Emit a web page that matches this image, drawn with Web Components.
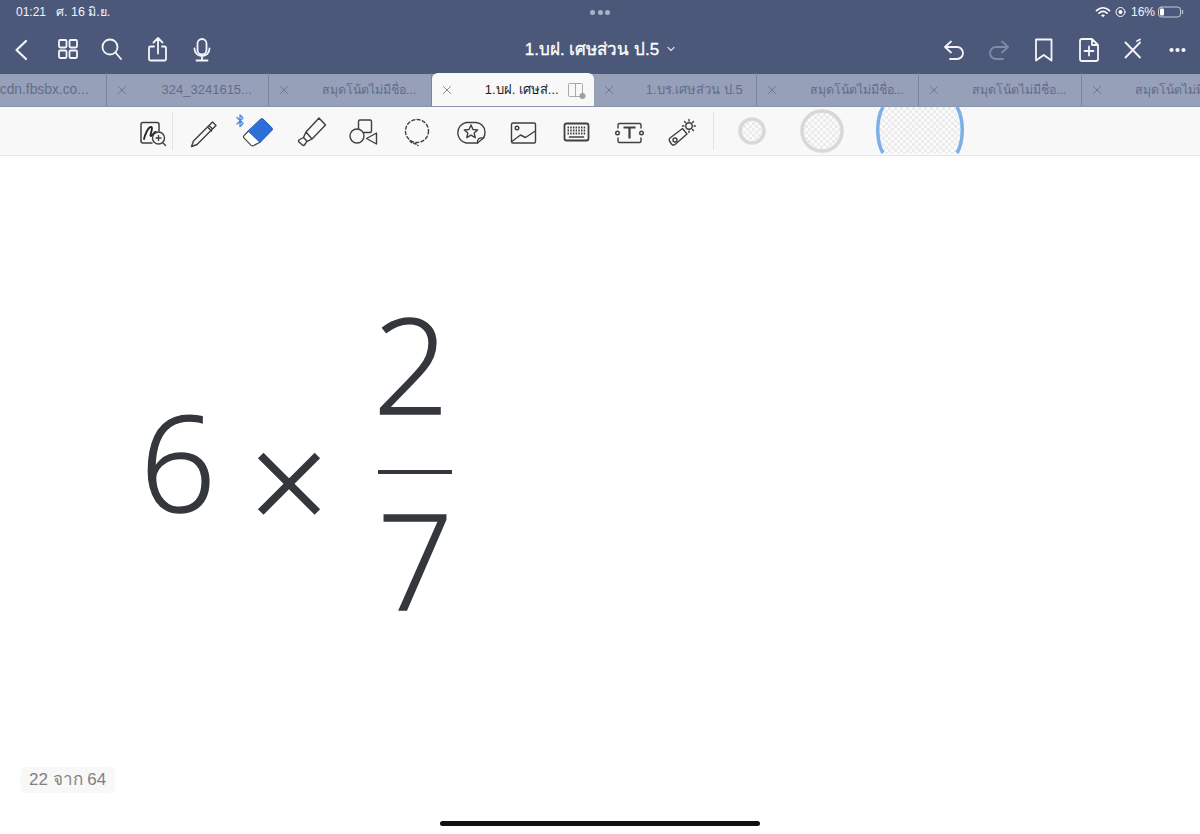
<!DOCTYPE html>
<html lang="th">
<head>
<meta charset="utf-8">
<title>Notes</title>
<style>
  html, body { margin: 0; height: 100%; background: #fff; }
  body { font-family: "Liberation Sans", "Noto Sans", "DejaVu Sans", sans-serif; overflow: hidden; }
  note-app { height: 834px; }
</style>
</head>
<body>
<note-app>
  <status-bar></status-bar>
  <nav-bar>1.บฝ. เศษส่วน ป.5</nav-bar>
  <tab-strip>
    <doc-tab first>cdn.fbsbx.co...</doc-tab>
    <doc-tab>324_3241615...</doc-tab>
    <doc-tab thai>สมุดโน้ตไม่มีชื่อ...</doc-tab>
    <doc-tab active>1.บฝ. เศษส่...</doc-tab>
    <doc-tab>1.บร.เศษส่วน ป.5</doc-tab>
    <doc-tab thai>สมุดโน้ตไม่มีชื่อ...</doc-tab>
    <doc-tab thai>สมุดโน้ตไม่มีชื่อ...</doc-tab>
    <doc-tab thai>สมุดโน้ตไม่มีชื่อ...</doc-tab>
  </tab-strip>
  <tool-bar></tool-bar>
  <note-page></note-page>
</note-app>

<script>
const svg = (w, h, body, extra = '') =>
    `<svg width="${w}" height="${h}" viewBox="0 0 ${w} ${h}" fill="none" stroke-linecap="round" stroke-linejoin="round" ${extra}>${body}</svg>`;

class StatusBar extends HTMLElement {
    constructor() {
        super();
        this.attachShadow({mode: 'open'});
    }

    connectedCallback() {
        this.shadowRoot.innerHTML = `
            <style>
                :host {
                    align-items: center;
                    background: #4c5879;
                    color: #f2f3f7;
                    display: grid;
                    font-size: 12px;
                    grid-template-columns: 1fr auto 1fr;
                    height: 24px;
                    padding: 0 16px;
                }
                .left, .right { align-items: center; display: flex; }
                .left span + span { margin-left: 10px; font-size: 12.5px; }
                .right { justify-content: flex-end; }
                .dots { display: flex; gap: 2.5px; }
                .dots i { background: #aab2c8; border-radius: 50%; height: 5px; width: 5px; }
                svg { display: block; }
            </style>
            <div class="left"><span>01:21</span><span>ศ. 16 มิ.ย.</span></div>
            <div class="dots"><i></i><i></i><i></i></div>
            <div class="right">
                ${svg(16, 12, `<path d="M1.5 4.6C5.5 1 10.5 1 14.5 4.6" stroke="#fff" stroke-width="1.7"/><path d="M4 7.1c2.5-2.1 5.500-2.100 8 0" stroke="#fff" stroke-width="1.700"/><path d="M6 9.200c1.300-.9 2.700-.9 4 0L8 11.300z" fill="#fff"/>`)}
                ${svg(13, 12, `<circle cx="6.500" cy="6" r="4.500" stroke="#fff" stroke-width="1"/><circle cx="6.500" cy="6" r="2" fill="#fff"/>`, 'style="margin-left:3px"')}
                <span style="margin-left:4px">16%</span>
                ${svg(26, 12, `<rect x=".5" y="1" width="22" height="10" rx="3" stroke="#c6cbd9"/><rect x="2" y="2.500" width="4" height="7" rx="1" fill="#fff"/><path d="M24.500 4.500v3" stroke="#c6cbd9" stroke-width="1.200"/>`, 'style="margin:0 0 0 3px"')}
            </div>
        `;
    }
}

class NavBar extends HTMLElement {
    constructor() {
        super();
        this.attachShadow({mode: 'open'});
    }

    connectedCallback() {
        const s = 'stroke="#f4f5f8" stroke-width="1.800"';
        const dim = 'stroke="#7f8aa8" stroke-width="1.800"';
        const left = [
            `<path d="M26 16l-9.500 9 9.500 9" stroke="#f4f5f8" stroke-width="2.200"/>`,
            `<rect x="14" y="15" width="7.500" height="7.500" rx="1.200" ${s}/><rect x="24.500" y="15" width="7.500" height="7.500" rx="1.200" ${s}/><rect x="14" y="25.500" width="7.500" height="7.500" rx="1.200" ${s}/><rect x="24.500" y="25.500" width="7.500" height="7.500" rx="1.200" ${s}/>`,
            `<circle cx="20" cy="22" r="7.500" ${s}/><path d="M25.500 27.500L31 34" ${s}/>`,
            `<path d="M19 21.500h-3.500a1.500 1.500 0 0 0-1.500 1.500v11a1.500 1.500 0 0 0 1.500 1.500h14a1.500 1.500 0 0 0 1.500-1.500V23a1.500 1.500 0 0 0-1.500-1.500H27M23 28.500V13.500M18.500 17.500l4.500-4.500 4.500 4.500" ${s}/>`,
            `<rect x="17.500" y="14" width="9" height="15.500" rx="4.500" ${s}/><path d="M14.500 23.500c0 10 15 10 15 0M22 31.500v3.500M16.500 35.500h11" ${s}/>`
        ];
        const right = [
            `<path d="M21 16.500L15 22l6 5.500M15.500 22H27a6 6 0 0 1 0 12h-7" ${s}/>`,
            `<path d="M27 16.500l6 5.500-6 5.500M32.500 22H21a6 6 0 0 0 0 12h7" ${dim}/>`,
            `<path d="M16 14.500h15.500v21l-7.750-5.500-7.750 5.500z" ${s}/>`,
            `<path d="M15 16a2 2 0 0 1 2-2h10l6 6v14a2 2 0 0 1-2 2H17a2 2 0 0 1-2-2zM27 14v6h6M24 21.500v9M19.500 26h9" ${s}/>`,
            `<path d="M15.500 17.500L30 32.500M15.500 32.500L30 17.500" ${s}/><path d="M27 16l3-1.500" ${s}/>`,
            `<circle cx="16.500" cy="25" r="2.100" fill="#f4f5f8"/><circle cx="22.500" cy="25" r="2.100" fill="#f4f5f8"/><circle cx="28.500" cy="25" r="2.100" fill="#f4f5f8"/>`
        ];
        const group = (icons) => icons.map((i) => svg(45, 48, i)).join('');
        this.shadowRoot.innerHTML = `
            <style>
                :host {
                    align-items: center;
                    background: #4c5879;
                    color: #fff;
                    display: grid;
                    grid-template-columns: 1fr auto 1fr;
                    height: 49px;
                }
                .icons { display: flex; }
                .icons.right { justify-content: flex-end; }
                .title {
                    align-items: center;
                    display: flex;
                    font-size: 17px;
                    -webkit-text-stroke: .3px #fff;
                    gap: 8px;
                }
                svg { display: block; flex: none; }
            </style>
            <div class="icons">${group(left)}</div>
            <div class="title"><slot></slot>${svg(8, 6, '<path d="M1 1.500l3 3 3-3" stroke="#d4d8e4" stroke-width="1.300"/>')}</div>
            <div class="icons right">${group(right)}</div>
        `;
    }
}

class TabStrip extends HTMLElement {
    constructor() {
        super();
        this.attachShadow({mode: 'open'});
    }

    connectedCallback() {
        this.shadowRoot.innerHTML = `
            <style>
                :host {
                    background: linear-gradient(#4c5879 0 1px, #97a0b9 1px);
                    border-bottom: 1px solid #8a94ae;
                    display: flex;
                    height: 33px;
                    overflow: hidden;
                }
                .row { display: flex; flex: none; margin-left: -56px; }
            </style>
            <div class="row"><slot></slot></div>
        `;
    }
}

class DocTab extends HTMLElement {
    constructor() {
        super();
        this.attachShadow({mode: 'open'});
    }

    connectedCallback() {
        const active = this.hasAttribute('active');
        const line = active ? '#8c8c8c' : '#6d7893';
        this.shadowRoot.innerHTML = `
            <style>
                :host {
                    align-items: center;
                    border-right: 1px solid #7a849f;
                    box-sizing: border-box;
                    color: #626d8a;
                    display: flex;
                    flex: none;
                    font-size: 13px;
                    height: 33px;
                    padding-left: 9px;
                    position: relative;
                    width: 162.500px;
                }
                :host([first]) { font-size: 13.8px; }
                :host([thai]) { font-size: 12.4px; }
                :host([active]) {
                    background: #f8f8f8;
                    border-radius: 6px 6px 0 0;
                    border-right: 0;
                    color: #1c1c1c;
                }
                :host([first]) .close { visibility: hidden; }
                .close { display: block; flex: none; }
                .label {
                    flex: 1;
                    padding-right: 1px;
                    padding-left: 19px;
                    text-align: center;
                    white-space: nowrap;
                }
                :host([active]) .label { padding-left: 26px; padding-right: 29px; }
                .split { position: absolute; right: 7px; top: 9px; }
            </style>
            ${svg(12, 12, `<path d="M2.500 2.500l7 7M9.500 2.500l-7 7" stroke="${line}" stroke-width="1"/>`, 'class="close"')}
            <span class="label"><slot></slot></span>
            ${active ? svg(20, 18, '<rect x="1.500" y="1.500" width="14" height="13" rx="1" stroke="#a8a8a8"/><path d="M8.500 1.500v13" stroke="#a8a8a8"/><circle cx="15.500" cy="14" r="3" fill="#a0a0a0"/>', 'class="split"') : ''}
        `;
    }
}

class ToolBar extends HTMLElement {
    constructor() {
        super();
        this.attachShadow({mode: 'open'});
    }

    connectedCallback() {
        const s = 'stroke="#3f3f3f" stroke-width="1.400"';
        const tools = [
            `<path d="M33 24v-6.500a2 2 0 0 0-2-2H17a2 2 0 0 0-2 2V34a2 2 0 0 0 2 2h9" stroke="#3f3f3f" stroke-width="1.500"/><path d="M18 32c1-4 4-12 7-12s-2 9 0 9 3-5 5-4" stroke="#222" stroke-width="1.800"/><circle cx="32.500" cy="31" r="6" fill="#f8f8f8" stroke="#3f3f3f" stroke-width="1.400"/><path d="M32.500 28.500v5M30 31h5M36.500 35.500l3 3" ${s}/>`,
            `<path d="M14.500 34l-2 5.500 5.500-2 15.500-15.500-3.500-3.500zM30 18.500l3.500-3.500 3.500 3.500-3.500 3.500" ${s}/><path d="M29 20.500l3.500 3.500" ${s}/>`,
            `<path d="M5 10.500l6 6-3 3V8l3 3-6 6" stroke="#4f86d8" stroke-width="1.300"/><path d="M28.500 12.200a2 2 0 0 1 2.800 0l8.500 8.500a2 2 0 0 1 0 2.800L27.500 36l-11.500-11.500z" fill="#2d6fd8" stroke="#1f55ad"/><path d="M16 24.500l-3.800 3.800a2 2 0 0 0 0 2.800l6.700 7a2.500 2.500 0 0 0 3.500 0l5.100-2.600" fill="#fff" stroke="#444" stroke-width="1.200"/>`,
            `<path d="M34 11l6.500 7L27 32l-6-7zM21 25l-2.500 5.500 3.800 3.900 4.700-2.400M18.500 30.500L13.800 33l-.3 1.500 4.500 4 1.500-.5 2.300-3.600" ${s}/>`,
            `<rect x="20.500" y="13" width="13" height="12.500" rx="1.500" ${s}/><circle cx="19" cy="29" r="7" fill="#f8f8f8" stroke="#3f3f3f" stroke-width="1.400"/><path d="M38.500 26v11l-10-5.500z" fill="#f8f8f8" stroke="#3f3f3f" stroke-width="1.400"/>`,
            `<circle cx="26" cy="24" r="11.500" ${s} stroke-dasharray="3 2.400"/><path d="M19 34c2 3 6 2 8 4.500" ${s} stroke-dasharray="2.500 2"/>`,
            `<path d="M22 15.500h10a9.500 9.500 0 0 1 9 9.500c0 3-.5 4.500-1.500 6l-6 5H22a10.500 10.500 0 0 1 0-20.500z" ${s}/><path d="M33.500 36c-.5-4 1.500-5.500 6-5" ${s}/><path d="M27 18l2 4.500 4.700.5-3.500 3 1 4.700-4.200-2.500-4.200 2.500 1-4.700-3.500-3 4.700-.5z" ${s} stroke-width="1.200"/>`,
            `<rect x="14.500" y="16" width="24" height="20" rx="1.500" ${s}/><circle cx="20" cy="21" r="1.800" ${s}/><path d="M15.500 34l8-6 5 2.500 9-6" ${s}/>`,
            `<rect x="14.500" y="16.500" width="24" height="17" rx="2" stroke="#3f3f3f" stroke-width="1.800"/><path d="M17.500 20.500h18M17.500 23.500h18M17.500 26.500h18" stroke="#3f3f3f" stroke-width="1.800" stroke-dasharray="1.500 1.200" stroke-linecap="butt"/><path d="M19.500 30h14" stroke="#3f3f3f" stroke-width="1.600"/>`,
            `<path d="M15 21v-3a1.500 1.500 0 0 1 1.500-1.500h20a1.500 1.500 0 0 1 1.500 1.500v3M15 31v3a1.500 1.500 0 0 0 1.500 1.500h20a1.500 1.500 0 0 0 1.500-1.500v-3" ${s}/><circle cx="14.500" cy="26" r="1.800" ${s}/><circle cx="38.500" cy="26" r="1.800" ${s}/><path d="M20.500 20.500h12M26.500 20.500v11" stroke="#3f3f3f" stroke-width="2.200" stroke-linecap="butt"/>`,
            `<path d="M14 31l12.500-9.500 4.500 5.500-12 10.500a2.500 2.500 0 0 1-3.500-.5l-2-3a2.300 2.300 0 0 1 .5-3z" ${s}/><circle cx="19" cy="33" r="2" ${s}/><circle cx="33" cy="19" r="3.200" ${s}/><path d="M33 12.500v1.500M33 24v1.500M26.500 19h1.500M38 19h1.500M28.500 14.500l1 1M36.500 22.500l1 1M37.500 14.500l-1 1" ${s}/>`
        ];
        const [first, ...rest] = tools;
        this.shadowRoot.innerHTML = `
            <style>
                :host {
                    align-items: center;
                    background: #f8f8f8;
                    border-bottom: 1px solid #e6e6e6;
                    box-sizing: border-box;
                    display: flex;
                    height: 49px;
                    overflow: hidden;
                    padding-left: 126px;
                }
                .sep { align-self: center; background: #e2e2e2; flex: none; height: 38px; width: 1px; }
                svg { display: block; flex: none; }
                .first-wrap { width: 46px; overflow: hidden; }
                .after { margin-left: 6px; }
                .sizes { align-items: center; display: flex; margin-left: 23px; }
            </style>
            <div class="first-wrap">${svg(52, 48, first)}</div>
            <span class="sep"></span>
            <span class="after"></span>
            ${rest.map((t) => svg(53, 48, t)).join('')}
            <span class="sep" style="margin-left:4px"></span>
            <div class="sizes">
                ${svg(30, 48, `<defs><pattern id="c" width="6" height="6" patternUnits="userSpaceOnUse"><rect width="6" height="6" fill="#fbfbfb"/><path d="M0 0h3v3H0zM3 3h3v3H3z" fill="#ebebeb" stroke="none"/></pattern></defs><circle cx="15" cy="24" r="12" fill="url(#c)" stroke="#d8d8d8" stroke-width="3.500"/>`)}
                ${svg(46, 48, `<circle cx="23" cy="24" r="20" fill="url(#c)" stroke="#d8d8d8" stroke-width="3.500"/>`, 'style="margin-left:32px"')}
                ${svg(90, 48, `<path d="M7 0C0 12 0 34 7 46L81 46C88 34 88 12 81 0z" fill="url(#c)" stroke="none"/><path d="M7 0C0 12 0 34 7 46M81 0C88 12 88 34 81 46" stroke="#7eaee6" stroke-width="3.500" stroke-linecap="butt"/>`, 'style="margin-left:31px"')}
            </div>
        `;
    }
}

class NotePage extends HTMLElement {
    constructor() {
        super();
        this.attachShadow({mode: 'open'});
    }

    connectedCallback() {
        this.shadowRoot.innerHTML = `
            <style>
                :host {
                    align-items: center;
                    background: #fff;
                    color: #34373c;
                    display: flex;
                    flex: 1;
                    font-family: "Open Sans", "Liberation Sans", sans-serif;
                    font-weight: 300;
                    font-size: 133px;
                    line-height: 98px;
                    padding: 0 0 68px 140px;
                    position: relative;
                }
                .math {
                    align-items: center;
                    display: flex;
                    filter: blur(.7px);
                    -webkit-text-stroke: 1.500px #34373c;
                }
                .times { font-size: 137px; margin-left: 34px; margin-top: 36px; -webkit-text-stroke-width: 2px; }
                .frac { align-items: center; display: flex; flex-direction: column; margin-left: 45px; }
                .two { margin-right: 8px; }
                .bar { background: #34373c; height: 4px; margin: 58px 0 36px; width: 74px; }
                .badge {
                    background: #f8f8f8;
                    border-radius: 6px;
                    bottom: 41px;
                    color: #808080;
                    font-family: "Liberation Sans", "Noto Sans", sans-serif;
                    font-size: 17px;
                    font-weight: 400;
                    left: 20px;
                    line-height: 26px;
                    padding: 0 9px;
                    position: absolute;
                }
                .home {
                    background: #111;
                    border-radius: 3px;
                    bottom: 8px;
                    height: 5px;
                    left: 440px;
                    position: absolute;
                    width: 320px;
                }
            </style>
            <div class="math">
                <span>6</span>
                <span class="times">×</span>
                <div class="frac"><span class="two">2</span><i class="bar"></i><span>7</span></div>
            </div>
            <div class="badge">22 จาก 64</div>
            <div class="home"></div>
        `;
    }
}

class NoteApp extends HTMLElement {
    constructor() {
        super();
        this.attachShadow({mode: 'open'});
        this.shadowRoot.innerHTML = `
            <style>:host { display: flex; flex-direction: column; }</style>
            <slot></slot>
        `;
    }
}

customElements.define('status-bar', StatusBar);
customElements.define('nav-bar', NavBar);
customElements.define('tab-strip', TabStrip);
customElements.define('doc-tab', DocTab);
customElements.define('tool-bar', ToolBar);
customElements.define('note-page', NotePage);
customElements.define('note-app', NoteApp);
</script>
</body>
</html>
